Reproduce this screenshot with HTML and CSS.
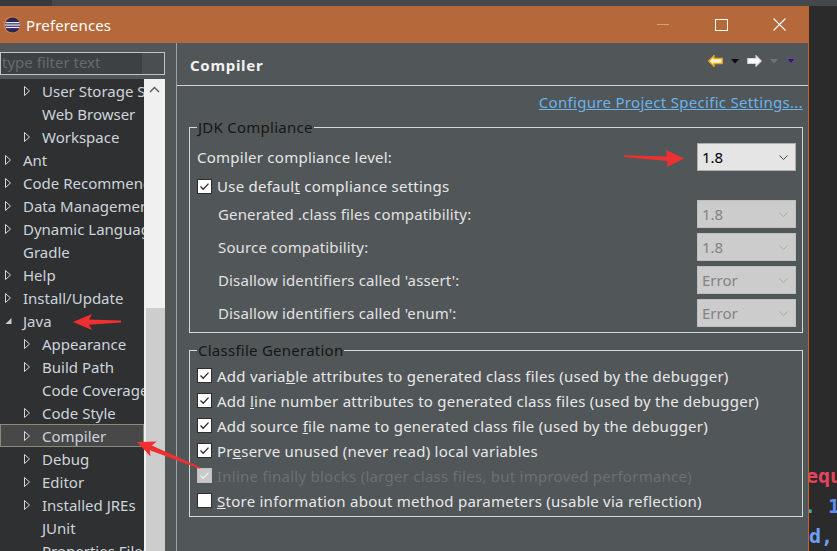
FILE: index.html
```html
<!DOCTYPE html>
<html>
<head>
<meta charset="utf-8">
<title>Preferences</title>
<link rel="stylesheet" href="styles.css">
</head>
<body>
<div class="screen">
  <div class="topstrip"><div class="ts-a"></div><div class="ts-b"></div></div>
  <div class="main">
    <div class="window">
      <div class="titlebar">
        <svg class="logo" width="18" height="18" viewBox="0 0 18 18">
          <circle cx="9" cy="9" r="8.5" fill="#d08040"/>
          <circle cx="9.5" cy="9" r="7.6" fill="#2d2458"/>
          <rect x="2.5" y="6" width="14" height="1.3" fill="#e8e6f2"/>
          <rect x="2" y="8.4" width="15" height="1.3" fill="#e8e6f2"/>
          <rect x="2.5" y="10.8" width="14" height="1.3" fill="#e8e6f2"/>
        </svg>
        <span class="title">Preferences</span>
        <div class="controls">
          <span class="ctl"><span class="min"></span></span>
          <span class="ctl"><span class="max"></span></span>
          <span class="ctl">
            <svg width="13" height="13" viewBox="0 0 13 13"><path d="M0.5 0.5 L12.5 12.5 M12.5 0.5 L0.5 12.5" stroke="#ffffff" stroke-width="1.1" fill="none"/></svg>
          </span>
        </div>
      </div>
      <div class="body">
        <div class="left">
          <div class="filter"><span>type filter text</span></div>
          <div class="treewrap">
            <div class="tree">
              <div class="node l2"><span class="tw"><svg width="7" height="10" viewBox="0 0 7 10"><path d="M0.5 0.5 L5.5 5 L0.5 9.5 Z" fill="none" stroke="#d4d8dc"/></svg></span>User Storage Service</div>
              <div class="node l2"><span class="tw"></span>Web Browser</div>
              <div class="node l2"><span class="tw"><svg width="7" height="10" viewBox="0 0 7 10"><path d="M0.5 0.5 L5.5 5 L0.5 9.5 Z" fill="none" stroke="#d4d8dc"/></svg></span>Workspace</div>
              <div class="node l1"><span class="tw"><svg width="7" height="10" viewBox="0 0 7 10"><path d="M0.5 0.5 L5.5 5 L0.5 9.5 Z" fill="none" stroke="#d4d8dc"/></svg></span>Ant</div>
              <div class="node l1"><span class="tw"><svg width="7" height="10" viewBox="0 0 7 10"><path d="M0.5 0.5 L5.5 5 L0.5 9.5 Z" fill="none" stroke="#d4d8dc"/></svg></span>Code Recommenders</div>
              <div class="node l1"><span class="tw"><svg width="7" height="10" viewBox="0 0 7 10"><path d="M0.5 0.5 L5.5 5 L0.5 9.5 Z" fill="none" stroke="#d4d8dc"/></svg></span>Data Management</div>
              <div class="node l1"><span class="tw"><svg width="7" height="10" viewBox="0 0 7 10"><path d="M0.5 0.5 L5.5 5 L0.5 9.5 Z" fill="none" stroke="#d4d8dc"/></svg></span>Dynamic Languages</div>
              <div class="node l1"><span class="tw"></span>Gradle</div>
              <div class="node l1"><span class="tw"><svg width="7" height="10" viewBox="0 0 7 10"><path d="M0.5 0.5 L5.5 5 L0.5 9.5 Z" fill="none" stroke="#d4d8dc"/></svg></span>Help</div>
              <div class="node l1"><span class="tw"><svg width="7" height="10" viewBox="0 0 7 10"><path d="M0.5 0.5 L5.5 5 L0.5 9.5 Z" fill="none" stroke="#d4d8dc"/></svg></span>Install/Update</div>
              <div class="node l1"><span class="tw"><svg width="7" height="10" viewBox="0 0 7 10"><path d="M6.5 2 L6.5 8 L0.5 8 Z" fill="#c8cccf"/></svg></span>Java</div>
              <div class="node l2"><span class="tw"><svg width="7" height="10" viewBox="0 0 7 10"><path d="M0.5 0.5 L5.5 5 L0.5 9.5 Z" fill="none" stroke="#d4d8dc"/></svg></span>Appearance</div>
              <div class="node l2"><span class="tw"><svg width="7" height="10" viewBox="0 0 7 10"><path d="M0.5 0.5 L5.5 5 L0.5 9.5 Z" fill="none" stroke="#d4d8dc"/></svg></span>Build Path</div>
              <div class="node l2"><span class="tw"></span>Code Coverage</div>
              <div class="node l2"><span class="tw"><svg width="7" height="10" viewBox="0 0 7 10"><path d="M0.5 0.5 L5.5 5 L0.5 9.5 Z" fill="none" stroke="#d4d8dc"/></svg></span>Code Style</div>
              <div class="node l2 sel"><span class="tw"><svg width="7" height="10" viewBox="0 0 7 10"><path d="M0.5 0.5 L5.5 5 L0.5 9.5 Z" fill="none" stroke="#d4d8dc"/></svg></span>Compiler</div>
              <div class="node l2"><span class="tw"><svg width="7" height="10" viewBox="0 0 7 10"><path d="M0.5 0.5 L5.5 5 L0.5 9.5 Z" fill="none" stroke="#d4d8dc"/></svg></span>Debug</div>
              <div class="node l2"><span class="tw"><svg width="7" height="10" viewBox="0 0 7 10"><path d="M0.5 0.5 L5.5 5 L0.5 9.5 Z" fill="none" stroke="#d4d8dc"/></svg></span>Editor</div>
              <div class="node l2"><span class="tw"><svg width="7" height="10" viewBox="0 0 7 10"><path d="M0.5 0.5 L5.5 5 L0.5 9.5 Z" fill="none" stroke="#d4d8dc"/></svg></span>Installed JREs</div>
              <div class="node l2"><span class="tw"></span>JUnit</div>
              <div class="node l2"><span class="tw"></span>Properties Files Editor</div>
            </div>
            <div class="vscroll">
              <div class="sb-up"><svg width="11" height="7" viewBox="0 0 11 7"><path d="M1 6 L5.5 1.5 L10 6" fill="none" stroke="#555" stroke-width="1.3"/></svg></div>
              <div class="sb-track"></div>
              <div class="sb-thumb"></div>
            </div>
          </div>
        </div>
        <div class="sash"></div>
        <div class="right">
          <div class="rhead">
            <span class="rtitle">Compiler</span>
            <div class="nav">
              <svg width="15" height="12" viewBox="0 0 15 12"><path d="M0.8 6 L6 0.8 L6 3.5 L14.2 3.5 L14.2 8.5 L6 8.5 L6 11.2 Z" fill="#fff6d2" stroke="#eaa61e" stroke-width="1.5"/></svg>
              <svg width="8" height="5" viewBox="0 0 8 5"><path d="M0 0 L8 0 L4 4.5 Z" fill="#0a0a0a"/></svg>
              <svg width="15" height="12" viewBox="0 0 15 12"><path d="M14.2 6 L9 0.8 L9 3.5 L0.8 3.5 L0.8 8.5 L9 8.5 L9 11.2 Z" fill="#ffffff" stroke="#d6d6d6" stroke-width="1.2"/></svg>
              <svg width="8" height="5" viewBox="0 0 8 5"><path d="M0 0 L8 0 L4 4.5 Z" fill="#707476"/></svg>
              <svg width="10" height="6" viewBox="0 0 10 6"><path d="M0.5 0.5 L9.5 0.5 L5 5.5 Z" fill="#2a2040" stroke="#6a4aa0" stroke-width="1"/></svg>
            </div>
          </div>
          <div class="rcontent">
            <div class="linkrow"><a class="link">Configure Project Specific Settings...</a></div>
            <fieldset class="group g1">
              <legend>JDK Compliance</legend>
              <div class="row1">
                <span class="lbl">Compiler compliance level:</span>
                <div class="combo"><span>1.8</span><svg width="9" height="5" viewBox="0 0 9 5"><path d="M0.5 0.5 L4.5 4.5 L8.5 0.5" fill="none" stroke="#444" stroke-width="1"/></svg></div>
              </div>
              <div class="chkrow first">
                <span class="cb"><svg width="13" height="13" viewBox="0 0 13 13"><path d="M2.5 6.5 L5.2 9.2 L10.5 3.6" fill="none" stroke="#2b2b2b" stroke-width="1.3"/></svg></span>
                <span class="clbl">Use defaul<u>t</u> compliance settings</span>
              </div>
              <div class="subrow">
                <span class="sublbl">Generated .class files compatibility:</span>
                <div class="combo dis"><span>1.8</span><svg width="9" height="5" viewBox="0 0 9 5"><path d="M0.5 0.5 L4.5 4.5 L8.5 0.5" fill="none" stroke="#a8a8a8" stroke-width="1"/></svg></div>
              </div>
              <div class="subrow">
                <span class="sublbl">Source compatibility:</span>
                <div class="combo dis"><span>1.8</span><svg width="9" height="5" viewBox="0 0 9 5"><path d="M0.5 0.5 L4.5 4.5 L8.5 0.5" fill="none" stroke="#a8a8a8" stroke-width="1"/></svg></div>
              </div>
              <div class="subrow">
                <span class="sublbl">Disallow identifiers called 'assert':</span>
                <div class="combo dis"><span>Error</span><svg width="9" height="5" viewBox="0 0 9 5"><path d="M0.5 0.5 L4.5 4.5 L8.5 0.5" fill="none" stroke="#a8a8a8" stroke-width="1"/></svg></div>
              </div>
              <div class="subrow">
                <span class="sublbl">Disallow identifiers called 'enum':</span>
                <div class="combo dis"><span>Error</span><svg width="9" height="5" viewBox="0 0 9 5"><path d="M0.5 0.5 L4.5 4.5 L8.5 0.5" fill="none" stroke="#a8a8a8" stroke-width="1"/></svg></div>
              </div>
            </fieldset>
            <fieldset class="group g2">
              <legend>Classfile Generation</legend>
              <div class="chkrow">
                <span class="cb"><svg width="13" height="13" viewBox="0 0 13 13"><path d="M2.5 6.5 L5.2 9.2 L10.5 3.6" fill="none" stroke="#2b2b2b" stroke-width="1.3"/></svg></span>
                <span class="clbl">Add varia<u>b</u>le attributes to generated class files (used by the debugger)</span>
              </div>
              <div class="chkrow">
                <span class="cb"><svg width="13" height="13" viewBox="0 0 13 13"><path d="M2.5 6.5 L5.2 9.2 L10.5 3.6" fill="none" stroke="#2b2b2b" stroke-width="1.3"/></svg></span>
                <span class="clbl">Add <u>l</u>ine number attributes to generated class files (used by the debugger)</span>
              </div>
              <div class="chkrow">
                <span class="cb"><svg width="13" height="13" viewBox="0 0 13 13"><path d="M2.5 6.5 L5.2 9.2 L10.5 3.6" fill="none" stroke="#2b2b2b" stroke-width="1.3"/></svg></span>
                <span class="clbl">Add source <u>f</u>ile name to generated class file (used by the debugger)</span>
              </div>
              <div class="chkrow">
                <span class="cb"><svg width="13" height="13" viewBox="0 0 13 13"><path d="M2.5 6.5 L5.2 9.2 L10.5 3.6" fill="none" stroke="#2b2b2b" stroke-width="1.3"/></svg></span>
                <span class="clbl">Pr<u>e</u>serve unused (never read) local variables</span>
              </div>
              <div class="chkrow">
                <span class="cb dis"><svg width="13" height="13" viewBox="0 0 13 13"><path d="M2.5 6.5 L5.2 9.2 L10.5 3.6" fill="none" stroke="#ececec" stroke-width="1.3"/></svg></span>
                <span class="clbl dim">Inline finally blocks (larger class files, but improved performance)</span>
              </div>
              <div class="chkrow">
                <span class="cb"></span>
                <span class="clbl"><u>S</u>tore information about method parameters (usable via reflection)</span>
              </div>
            </fieldset>
          </div>
        </div>
      </div>
    </div>
    <div class="behind">
      <div class="code c1">equ</div>
      <div class="code c2"><span class="dot">.</span> 1</div>
      <div class="code c3">d,</div>
    </div>
  </div>
  <svg class="annot" width="837" height="551" viewBox="0 0 837 551">
    <polygon points="73,322 92,314 89,319.5 121,320.6 121,322.4 89,324.8 92,330" fill="#f03030"/>
    <polygon points="624,155.3 667,156.6 666,150 684,158.5 667,167 667.5,161 624,156.9" fill="#f03030"/>
    <polygon points="137,442 156.7,441.6 151.8,445.6 200.3,467.3 199.7,468.7 149.8,450.2 150.5,456.4" fill="#f03030"/>
  </svg>
</div>
</body>
</html>
```

FILE: styles.css
```css
* { box-sizing: border-box; }
html, body { margin: 0; padding: 0; }
body {
  background: #2b2b2b;
  font-family: "Noto Sans", "Open Sans", sans-serif;
  font-size: 15px;
  overflow: hidden;
}
.screen {
  position: relative;
  width: 837px;
  height: 551px;
  display: flex;
  flex-direction: column;
  overflow: hidden;
}
.topstrip { height: 6px; display: flex; flex: none; }
.ts-a { width: 52px; background: #383b3e; }
.ts-b { flex: 1; background: #45484b; }
.main { flex: 1; display: flex; min-height: 0; }

.window {
  width: 809px;
  flex: none;
  border-right: 1px solid #c4622a;
  display: flex;
  flex-direction: column;
}
.titlebar {
  height: 37px;
  flex: none;
  background: #b5693a;
  display: flex;
  align-items: center;
  padding-left: 3px;
}
.logo { flex: none; margin-right: 5px; }
.title { color: #ffffff; font-size: 15px; letter-spacing: 0.15px; }
.controls { margin-left: auto; display: flex; height: 100%; }
.ctl { width: 58px; display: flex; align-items: center; justify-content: center; }
.min { width: 12px; height: 1px; background: #d4a07c; }
.max { width: 13px; height: 12px; border: 1px solid #ffffff; }

.body { flex: 1; display: flex; background: #515658; min-height: 0; }

.left { width: 165px; flex: none; display: flex; flex-direction: column; padding-top: 9px; }
.filter {
  height: 23px;
  flex: none;
  border: 1px solid #c4c4c4;
  background: linear-gradient(to right, #3d4144 141px, #4a4e51 141px);
  color: #666a6d;
  font-size: 15px;
  line-height: 19px;
  padding-left: 1px;
  overflow: hidden;
  white-space: nowrap;
}
.treewrap { flex: 1; display: flex; margin-top: 4px; min-height: 0; }
.tree {
  width: 144px;
  flex: none;
  background: #2f3031;
  overflow: hidden;
  color: #cdd4db;
  font-size: 15px;
}
.node {
  height: 23px;
  display: flex;
  align-items: center;
  white-space: nowrap;
}
.l1 { padding-left: 5px; }
.l2 { padding-left: 24px; }
.tw { width: 18px; flex: none; display: flex; align-items: center; }
.node.sel { background: #484848; border: 1px solid #8a8a7a; padding-left: 23px; }
.vscroll { flex: 1; display: flex; flex-direction: column; background: #f0f0f0; }
.sb-up { height: 20px; flex: none; display: flex; align-items: center; justify-content: center; }
.sb-track { height: 209px; flex: none; }
.sb-thumb { flex: 1; background: #cdcdcd; margin-left: 2px; }

.sash { width: 11px; flex: none; }

.right {
  flex: 1;
  display: flex;
  flex-direction: column;
  border-left: 1px solid #a0a3a5;
  min-width: 0;
}
.rhead {
  height: 43px;
  flex: none;
  display: flex;
  align-items: center;
  padding: 0 12px 0 13px;
  border-bottom: 1px solid #d2d2d2;
}
.rtitle { color: #f2f2f2; font-weight: bold; font-size: 15px; letter-spacing: 0.7px; padding-top: 2px; }
.nav { margin-left: auto; display: flex; align-items: center; gap: 8px; align-self: flex-start; margin-top: 12px; }

.rcontent { padding: 0 5px 0 12px; }
.linkrow { text-align: right; margin-top: 7px; line-height: 19px; }
.link { color: #6ab3ea; text-decoration: underline; font-size: 15px; letter-spacing: 0.3px; }

.group {
  margin: 0;
  min-width: 0;
  border: 1px solid #d8d8d8;
  padding: 6px 6px 5px 7px;
  letter-spacing: 0.25px;
}
.group legend {
  color: #161616;
  font-size: 15px;
  line-height: 20px;
  padding: 0 1px;
}
.g1 { margin-top: 5px; }
.g2 { margin-top: 7px; padding-top: 3px; padding-bottom: 3px; }

.row1 { height: 28px; display: flex; align-items: center; justify-content: space-between; }
.lbl { color: #e6e6e6; }
.subrow { height: 28px; margin-top: 5px; display: flex; align-items: center; justify-content: space-between; }
.chkrow.first + .subrow { margin-top: 4px; }
.sublbl { color: #e2e2e2; font-size: 15px; letter-spacing: 0.15px; padding-left: 21px; }

.combo {
  width: 99px;
  height: 28px;
  border: 1px solid #adadad;
  background: #e5e5e5;
  display: flex;
  align-items: center;
  justify-content: space-between;
  padding: 0 7px 0 4px;
  color: #000000;
  font-size: 15px;
  letter-spacing: 0;
}
.combo.dis { background: #cccccc; border-color: #bfbfbf; color: #838383; }

.chkrow { height: 25px; display: flex; align-items: center; gap: 5px; white-space: nowrap; }
.chkrow.first { height: 20px; margin-top: 5px; }
.cb {
  width: 15px;
  height: 15px;
  flex: none;
  border: 1px solid #2e2e2e;
  background: #ffffff;
  display: flex;
  align-items: center;
  justify-content: center;
}
.cb.dis { background: #c9c9c9; border-color: #c0c0c0; }
.clbl { color: #e8e8e8; }
.clbl.dim { color: #6c7072; }

.behind {
  flex: 1;
  background: #2b2b2b;
  overflow: hidden;
  padding-top: 455px;
  font-family: "DejaVu Sans Mono", monospace;
  font-weight: bold;
  font-size: 20px;
  line-height: 30px;
}
.code { height: 30px; white-space: pre; }
.c1 { color: #e8435e; margin-left: -3px; }
.c2 { color: #5a8ff5; margin-left: -5px; }
.dot { color: #2fb2c9; }
.c3 { color: #6d9ff7; }

.annot { position: absolute; left: 0; top: 0; pointer-events: none; }
```
